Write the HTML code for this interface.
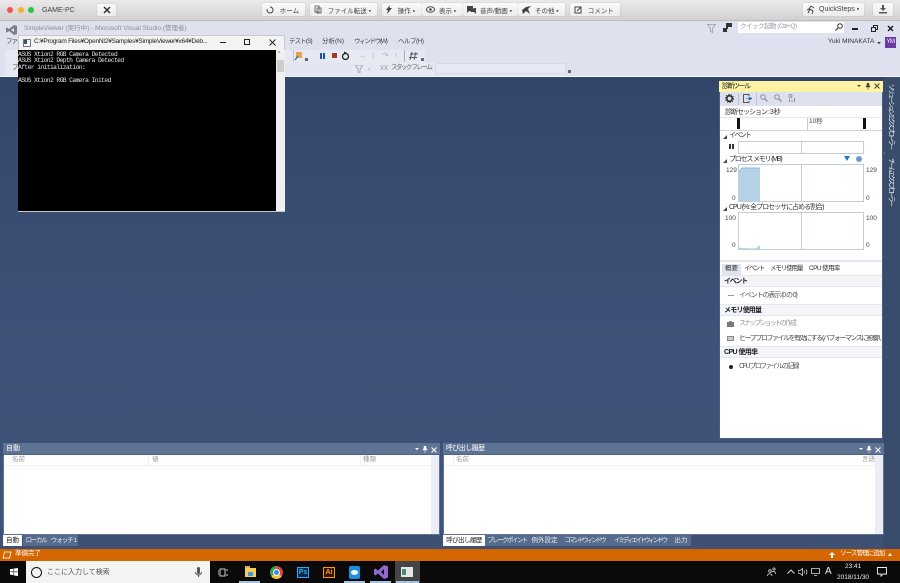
<!DOCTYPE html>
<html lang="ja"><head><meta charset="utf-8">
<style>
*{margin:0;padding:0;box-sizing:border-box}
html{background:#3c4f70}
html,body{width:900px;height:583px;overflow:hidden}
body{position:relative;font-family:"Liberation Sans","Noto Sans CJK JP",sans-serif;font-size:7px;color:#333;filter:blur(.3px)}
.a{position:absolute}
.t{position:absolute;white-space:nowrap;line-height:1}
.btn{position:absolute;top:3px;height:13px;background:linear-gradient(#fafafa,#ececec);border-radius:2px;box-shadow:0 0 1px #aaa;display:flex;align-items:center;font-size:6.5px;color:#444;white-space:nowrap}
.btn svg{margin:0 4px 0 4px}
.dot{position:absolute;top:7px;width:6px;height:6px;border-radius:50%}
.plot{position:absolute;background:#fff;border:1px solid #c6cbdb}
.plot i{position:absolute;left:50%;top:0;bottom:0;width:1px;background:#c6cbdb}
.hdr{position:absolute;background:#f4f5f9;border-top:1px solid #e3e6f0;border-bottom:1px solid #e3e6f0;height:12px;font-weight:bold;font-size:7px;line-height:11px;padding-left:4px;color:#222}
.tab{position:absolute;top:535px;height:11px;background:#566a8c;color:#e8ecf4;font-size:6.5px;line-height:11px;text-align:center;white-space:nowrap;overflow:hidden}
.tab.on{background:#fff;color:#222}
.ttl{position:absolute;height:12px;background:#5f7494;border-bottom:1px solid #4e6384;color:#fff;font-size:7px;line-height:11px;padding-left:3px}
.vt{position:absolute;writing-mode:vertical-rl;text-orientation:sideways;color:#f0f2f8;font-size:6.5px;letter-spacing:-2.2px;line-height:1;white-space:nowrap;left:887px}
.tri{position:absolute;width:0;height:0;border-left:2px solid transparent;border-right:2px solid transparent;border-top:2px solid #444}
.st{position:absolute;width:0;height:0;border-right:4px solid #444;border-top:4px solid transparent}
</style></head><body>

<!-- main bg -->
<div class="a" style="left:0;top:76px;width:900px;height:473px;background:linear-gradient(#33466a,#3f537a 60%,#3e5175)"></div>

<!-- mac bar -->
<div class="a" style="left:0;top:0;width:900px;height:21px;background:linear-gradient(#ebe9e9,#d2d0d0);border-bottom:1px solid #bdbdbd"></div>
<div class="dot" style="left:7px;background:#f0574e"></div>
<div class="dot" style="left:18px;background:#f6b52e"></div>
<div class="dot" style="left:28px;background:#2ec440"></div>
<div class="t" style="left:42px;top:7px;font-size:7px;color:#444">GAME-PC</div>
<div class="btn" style="left:97px;width:19px;justify-content:center;top:4px;height:12px"><svg width="8" height="8" viewBox="0 0 8 8" style="margin:0"><path d="M1 1L7 7M7 1L1 7" stroke="#333" stroke-width="1.5"/></svg></div>
<div class="btn" style="left:262px;width:43px"><svg width="8" height="8" viewBox="0 0 8 8"><path d="M4 1A3 3 0 1 1 1.2 3" fill="none" stroke="#444"/></svg>&nbsp;ホーム</div>
<div class="btn" style="left:310px;width:67px"><svg width="8" height="9" viewBox="0 0 8 9"><path d="M1 1h4v6H1zM3 3h4v5H3z" fill="#fff" stroke="#444" stroke-width=".8"/></svg>&nbsp;ファイル転送 ▪</div>
<div class="btn" style="left:382px;width:40px"><svg width="6" height="9" viewBox="0 0 6 9"><path d="M4 0L0 5h2L1 9l5-6H3.500z" fill="#444"/></svg>&nbsp;操作 ▪</div>
<div class="btn" style="left:422px;width:41px"><svg width="9" height="7" viewBox="0 0 9 7"><ellipse cx="4.500" cy="3.500" rx="4" ry="2.800" fill="none" stroke="#444"/><circle cx="4.500" cy="3.500" r="1.300" fill="#444"/></svg>表示 ▪</div>
<div class="btn" style="left:463px;width:55px"><svg width="9" height="8" viewBox="0 0 9 8"><path d="M0 0h6v5H2L0 7zM7 2h2v6L7 6H3" fill="#444"/></svg>音声/動画 ▪</div>
<div class="btn" style="left:518px;width:47px"><svg width="9" height="8" viewBox="0 0 9 8"><path d="M0 4L4 1 9 0 6 3 8 8 4 5 1 8z" fill="#444"/></svg>その他 ▪</div>
<div class="btn" style="left:570px;width:50px"><svg width="8" height="8" viewBox="0 0 8 8"><path d="M1 1h6v6H1z" fill="none" stroke="#444"/><path d="M3 5L7 1" stroke="#444"/></svg>&nbsp;コメント</div>
<div class="btn" style="left:803px;width:61px;color:#444;font-size:7px"><svg width="8" height="9" viewBox="0 0 8 9"><path d="M4 1L2 4 0 5M4 1l3 2M3 4l3 2-1 3M3 4L1 8" fill="none" stroke="#444"/></svg>QuickSteps ▪</div>
<div class="btn" style="left:873px;width:20px;justify-content:center"><svg width="8" height="9" viewBox="0 0 8 9" style="margin:0"><path d="M3 0h2v3h2L4 6 1 3h2zM0 7h8v1.500H0z" fill="#555"/></svg></div>

<!-- VS chrome -->
<div class="a" style="left:0;top:21px;width:900px;height:55px;background:#dfe2ee"></div>
<div class="a" style="left:0;top:76px;width:900px;height:1px;background:#f4f6fb"></div>
<svg class="a" style="left:6px;top:25px" width="11" height="10" viewBox="0 0 11 10"><path d="M8 0l3 1v8L8 10 3 6 1 7.500 0 7V3l1-.500L3 4zM8 3L5 5l3 2z" fill="#7a7f8e"/></svg>
<div class="t" style="left:24px;top:26px;font-size:6.5px;color:#8a8d99">SimpleViewer (実行中) - Microsoft Visual Studio (管理者)</div>
<div class="t" style="left:6px;top:39px;font-size:6.5px;color:#444;letter-spacing:-1px">ファイル</div>
<div class="t" style="left:289px;top:39px;font-size:6.5px;color:#444;letter-spacing:-.9px">テスト(S)</div>
<div class="t" style="left:322px;top:39px;font-size:6.5px;color:#444">分析(N)</div>
<div class="t" style="left:354px;top:39px;font-size:6.5px;color:#444;letter-spacing:-1.3px">ウィンドウ(W)</div>
<div class="t" style="left:398px;top:39px;font-size:6.5px;color:#444;letter-spacing:-.5px">ヘルプ(H)</div>

<!-- toolbars -->
<div class="a" style="left:5px;top:50px;width:420px;height:13px;background:#e6e8f2"></div>
<div class="a" style="left:5px;top:63px;width:560px;height:12px;background:#e6e8f2"></div>
<div class="a" style="left:293px;top:50px;width:1px;height:12px;background:#c3c7d4"></div>
<svg class="a" style="left:294px;top:51px" width="9" height="10" viewBox="0 0 9 10"><rect x="2" y="1" width="6" height="6" fill="#e8a34a"/><path d="M1 9L4 5" stroke="#2a72c0" stroke-width="1.300"/></svg>
<div class="a" style="left:305px;top:58px;width:3px;height:3px;background:#5d6a88"></div>
<div class="a" style="left:320px;top:53px;width:2px;height:6px;background:#1f4f9a"></div>
<div class="a" style="left:323px;top:53px;width:2px;height:6px;background:#1f4f9a"></div>
<div class="a" style="left:332px;top:53px;width:5px;height:5px;background:#a9371c"></div>
<svg class="a" style="left:341px;top:51px" width="9" height="10" viewBox="0 0 9 10"><circle cx="4.500" cy="5.500" r="3" fill="none" stroke="#222" stroke-width="1.300"/><path d="M3 .500L6 2 3 3.500z" fill="#222"/></svg>
<div class="t" style="left:358px;top:52px;font-size:8px;color:#b0b4c0">→</div>
<div class="t" style="left:371px;top:52px;font-size:8px;color:#b0b4c0">↕</div>
<div class="t" style="left:382px;top:52px;font-size:8px;color:#b0b4c0">↷</div>
<div class="t" style="left:394px;top:52px;font-size:8px;color:#b0b4c0">↑</div>
<div class="a" style="left:404px;top:50px;width:1px;height:12px;background:#a8adbc"></div>
<svg class="a" style="left:409px;top:51px" width="9" height="10" viewBox="0 0 9 10"><path d="M3 1L1 9M7 1L5 9M1 3h8M0 6.500h8" stroke="#555" stroke-width=".9"/></svg>
<div class="a" style="left:421px;top:58px;width:3px;height:3px;background:#5d6a88"></div>
<div class="t" style="left:12px;top:65px;font-size:6.500px;color:#555">プ</div>
<div class="a" style="left:285px;top:63px;width:66px;height:11px;background:#e3e5ef"></div>
<div class="a" style="left:435px;top:63px;width:131px;height:11px;background:#e8eaf3;border:1px solid #d6d9e6"></div>
<svg class="a" style="left:355px;top:65px" width="8" height="8" viewBox="0 0 8 8"><path d="M0 0h8L5 4v4L3 7V4z" fill="none" stroke="#a6aab8"/></svg>
<div class="t" style="left:368px;top:65px;font-size:7px;color:#a6aab8">ₓ</div>
<div class="t" style="left:380px;top:66px;font-size:6px;color:#8a8d9a">XX</div>
<div class="t" style="left:391px;top:65px;font-size:6.500px;color:#666;letter-spacing:-1.5px">スタック フレーム:</div>
<div class="a" style="left:568px;top:70px;width:3px;height:3px;background:#5d6a88"></div>

<svg class="a" style="left:707px;top:24px" width="9" height="9" viewBox="0 0 9 9"><path d="M.5.500h8L5.500 4.500v4L3.500 7.500v-3z" fill="none" stroke="#9a9eac" stroke-width=".8"/></svg>
<svg class="a" style="left:723px;top:23px" width="9" height="9" viewBox="0 0 9 9"><path d="M3 0h6v4H5v2H3zM0 5h4v4H0z" fill="#333"/></svg>
<div class="a" style="left:738px;top:22px;width:106px;height:11px;background:#fff"></div>
<div class="t" style="left:740px;top:24px;font-size:6.500px;color:#9a9ca6;letter-spacing:-.5px">クイック起動 (Ctrl+Q)</div>
<svg class="a" style="left:835px;top:23px" width="8" height="8" viewBox="0 0 8 8"><circle cx="5" cy="3" r="2.300" fill="none" stroke="#333"/><path d="M3 5L.5 7.500" stroke="#333" stroke-width="1.200"/></svg>
<div class="a" style="left:852px;top:28px;width:6px;height:2px;background:#222"></div>
<div class="a" style="left:873px;top:25px;width:5px;height:5px;border:1px solid #222"></div>
<div class="a" style="left:871px;top:27px;width:5px;height:5px;border:1px solid #222;background:#dfe2ee"></div>
<svg class="a" style="left:887px;top:25px" width="7" height="7" viewBox="0 0 7 7"><path d="M1 1L6 6M6 1L1 6" stroke="#111" stroke-width="1.300"/></svg>
<div class="t" style="left:828px;top:39px;font-size:6.500px;color:#333">Yuki MINAKATA</div>
<div class="tri" style="left:877px;top:42px;border-top-color:#333"></div>
<div class="a" style="left:885px;top:37px;width:11px;height:11px;background:#6b3aa0;color:#fff;font-size:6px;line-height:11px;text-align:center;letter-spacing:-.5px">YM</div>

<!-- console -->
<div class="a" style="left:18px;top:35px;width:267px;height:177px;background:#f3f3f3;border:1px solid #c9c9c9"></div>
<div class="a" style="left:18px;top:50px;width:258px;height:161px;background:#000"></div>
<div class="a" style="left:276px;top:50px;width:9px;height:161px;background:#f0f0f0"></div>
<div class="a" style="left:277px;top:60px;width:7px;height:12px;background:#cdcdcd"></div>
<div class="t" style="left:278px;top:52px;font-size:5px;color:#555">^</div>
<svg class="a" style="left:23px;top:39px" width="8" height="8" viewBox="0 0 8 8"><rect x=".5" y=".5" width="7" height="7" fill="#fff" stroke="#778"/><rect x="1" y="1" width="3" height="4" fill="#356"/></svg>
<div class="t" style="left:34px;top:39px;font-size:6.5px;letter-spacing:-.25px;color:#222">C:¥Program Files¥OpenNI2¥Samples¥SimpleViewer¥x64¥Deb...</div>
<div class="a" style="left:220px;top:42px;width:6px;height:1px;background:#222"></div>
<div class="a" style="left:244px;top:39px;width:6px;height:6px;border:1px solid #222"></div>
<svg class="a" style="left:269px;top:39px" width="7" height="7" viewBox="0 0 7 7"><path d="M.5.500l6 6M6.500.500l-6 6" stroke="#222" stroke-width=".9"/></svg>
<div class="t" style="left:18px;top:52px;font-family:'Liberation Mono',monospace;font-size:6.300px;line-height:6.450px;letter-spacing:-.58px;color:#e0e0e0;white-space:pre">ASUS Xtion2 RGB Camera Detected
ASUS Xtion2 Depth Camera Detected
After initialization:

ASUS Xtion2 RGB Camera Inited</div>

<!-- right vertical tabs -->
<div class="a" style="left:883px;top:77px;width:17px;height:472px;background:#3a4c6c"></div>
<div class="vt" style="top:84px">ソリューション エクスプローラー</div>
<div class="vt" style="top:158px">チーム エクスプローラー</div>
<div class="a" style="left:884px;top:152px;width:1px;height:3px;background:#5f7494"></div>

<!-- diag panel -->
<div class="a" style="left:719px;top:81px;width:164px;height:358px;background:#fff;border:1px solid #4a5d80;border-top:0"></div>
<div class="a" style="left:719px;top:81px;width:164px;height:11px;background:#fdf3a3"></div>
<div class="t" style="left:722px;top:83px;font-size:7px;color:#222;letter-spacing:-1.5px">診断ツール</div>
<div class="tri" style="left:857px;top:85px"></div>
<svg class="a" style="left:865px;top:83px" width="6" height="7" viewBox="0 0 6 7"><path d="M2 0h2v3h1v1H1V3h1zM3 4v3" fill="#444" stroke="#444" stroke-width=".5"/></svg>
<svg class="a" style="left:874px;top:83px" width="6" height="6" viewBox="0 0 6 6"><path d="M.5.500l5 5M5.500.500l-5 5" stroke="#444"/></svg>
<div class="a" style="left:720px;top:92px;width:162px;height:14px;background:#dde1ed"></div>
<svg class="a" style="left:725px;top:94px" width="9" height="9" viewBox="0 0 9 9"><circle cx="4.500" cy="4.500" r="2.700" fill="none" stroke="#222" stroke-width="1.500"/><circle cx="4.500" cy="4.500" r="4" fill="none" stroke="#222" stroke-width="1" stroke-dasharray="1.200 1.300"/></svg>
<div class="a" style="left:738px;top:93px;width:1px;height:12px;background:#bcc1d0"></div>
<svg class="a" style="left:743px;top:94px" width="9" height="9" viewBox="0 0 9 9"><path d="M6 2V.5H.5v8H6V7" fill="none" stroke="#555"/><path d="M3 4.500h3V3l3 1.500L6 6V4.500" fill="#1e6fb8" stroke="#1e6fb8" stroke-width=".6"/></svg>
<div class="a" style="left:756px;top:93px;width:1px;height:12px;background:#bcc1d0"></div>
<svg class="a" style="left:760px;top:94px" width="8" height="8" viewBox="0 0 8 8"><circle cx="3" cy="3" r="2.300" fill="none" stroke="#8b8f9c"/><path d="M5 5l2.500 2.500" stroke="#8b8f9c" stroke-width="1.300"/></svg>
<svg class="a" style="left:774px;top:94px" width="8" height="8" viewBox="0 0 8 8"><circle cx="3" cy="3" r="2.300" fill="none" stroke="#8b8f9c"/><path d="M5 5l2.500 2.500" stroke="#8b8f9c" stroke-width="1.300"/></svg>
<svg class="a" style="left:788px;top:94px" width="8" height="8" viewBox="0 0 8 8"><circle cx="2.500" cy="2" r="1.500" fill="none" stroke="#8b8f9c"/><path d="M1 5h1v3H1zM3.500 6h1v2h-1zM6 4h1v4H6z" fill="#8b8f9c"/></svg>
<div class="t" style="left:725px;top:109px;font-size:7px;color:#333;letter-spacing:-1px">診断セッション : 3 秒</div>
<div class="a" style="left:720px;top:117px;width:162px;height:14px;background:#fff;border-top:1px solid #e2e5ee;border-bottom:1px solid #cfd3e0"></div>
<div class="a" style="left:737px;top:118px;width:3px;height:11px;background:#111"></div>
<div class="a" style="left:863px;top:118px;width:3px;height:11px;background:#111"></div>
<div class="a" style="left:807px;top:118px;width:1px;height:12px;background:#c6cbdb"></div>
<div class="t" style="left:809px;top:119px;font-size:6.500px;color:#444">10秒</div>
<div class="st" style="left:723px;top:135px"></div>
<div class="t" style="left:729px;top:132px;font-size:7px;color:#333;letter-spacing:-1.7px">イベント</div>
<div class="a" style="left:729px;top:144px;width:2px;height:5px;background:#333"></div>
<div class="a" style="left:732px;top:144px;width:2px;height:5px;background:#333"></div>
<div class="plot" style="left:738px;top:141px;width:126px;height:13px"><i></i></div>
<div class="st" style="left:723px;top:159px"></div>
<div class="t" style="left:729px;top:156px;font-size:7px;color:#333;letter-spacing:-1.2px">プロセス メモリ (MB)</div>
<div class="a" style="left:844px;top:156px;width:0;height:0;border-left:3px solid transparent;border-right:3px solid transparent;border-top:5px solid #1e7ac8"></div>
<div class="a" style="left:856px;top:156px;width:6px;height:6px;border-radius:50%;background:#6a9bd0"></div>
<div class="plot" style="left:738px;top:164px;width:126px;height:38px"><i></i></div>
<svg class="a" style="left:739px;top:167px" width="22" height="34" viewBox="0 0 22 34"><path d="M0 34V5L3 1H21V34z" fill="#b4d2e6"/><path d="M0 5L3 1H21" fill="none" stroke="#8cb8d8"/></svg>
<div class="t" style="left:726px;top:168px;font-size:6.500px;color:#444">129</div>
<div class="t" style="left:732px;top:196px;font-size:6.500px;color:#444">0</div>
<div class="t" style="left:866px;top:168px;font-size:6.500px;color:#444">129</div>
<div class="t" style="left:866px;top:196px;font-size:6.500px;color:#444">0</div>
<div class="st" style="left:723px;top:207px"></div>
<div class="t" style="left:729px;top:204px;font-size:7px;color:#333;letter-spacing:-1px">CPU (%: 全プロセッサに占める割合)</div>
<div class="plot" style="left:738px;top:212px;width:126px;height:38px"><i></i></div>
<svg class="a" style="left:739px;top:244px" width="24" height="5" viewBox="0 0 24 5"><path d="M0 5V3.500L3 4l12 .500L19 3l2-2V5z" fill="#b4d2e6"/></svg>
<div class="t" style="left:725px;top:216px;font-size:6.500px;color:#444">100</div>
<div class="t" style="left:732px;top:243px;font-size:6.500px;color:#444">0</div>
<div class="t" style="left:866px;top:216px;font-size:6.500px;color:#444">100</div>
<div class="t" style="left:866px;top:243px;font-size:6.500px;color:#444">0</div>
<div class="a" style="left:720px;top:260px;width:162px;height:2px;background:#e3e6f0"></div>
<div class="a" style="left:722px;top:264px;width:19px;height:11px;background:#dfe4f0"></div>
<div class="t" style="left:725px;top:266px;font-size:6.500px;color:#333">概要</div>
<div class="t" style="left:744px;top:266px;font-size:6.500px;color:#333;letter-spacing:-1.6px">イベント</div>
<div class="t" style="left:770px;top:266px;font-size:6.500px;color:#333;letter-spacing:-1.1px">メモリ使用量</div>
<div class="t" style="left:809px;top:266px;font-size:6.500px;color:#333;letter-spacing:-.6px">CPU 使用率</div>
<div class="hdr" style="top:275px;width:162px;left:720px;letter-spacing:-1.3px">イベント</div>
<div class="a" style="left:728px;top:295px;width:6px;height:1px;background:#999"></div>
<div class="t" style="left:739px;top:292px;font-size:7px;color:#555;letter-spacing:-1.1px">イベントの表示 (0 の 0)</div>
<div class="hdr" style="top:304px;width:162px;left:720px;letter-spacing:-.8px">メモリ使用量</div>
<svg class="a" style="left:727px;top:321px" width="7" height="6" viewBox="0 0 7 6"><path d="M0 1h2l.5-1h2L5 1h2v5H0z" fill="#777"/></svg>
<div class="t" style="left:739px;top:320px;font-size:7px;color:#999;letter-spacing:-1.9px">スナップショットの作成</div>
<div class="a" style="left:727px;top:336px;width:7px;height:5px;background:#ccc;border:1px solid #888"></div>
<div class="t" style="left:739px;top:335px;font-size:7px;color:#444;width:142px;overflow:hidden;letter-spacing:-1.5px">ヒープ プロファイルを有効にする (パフォーマンスに影響し...</div>
<div class="hdr" style="top:346px;width:162px;left:720px;letter-spacing:-.6px">CPU 使用率</div>
<div class="a" style="left:729px;top:365px;width:4px;height:4px;border-radius:50%;background:#222"></div>
<div class="t" style="left:739px;top:363px;font-size:7px;color:#555;letter-spacing:-1.6px">CPU プロファイルの記録</div>

<!-- bottom left panel -->
<div class="a" style="left:3px;top:443px;width:437px;height:92px;background:#fff;border:1px solid #5f7494"></div>
<div class="ttl" style="left:3px;top:443px;width:437px">自動</div>
<div class="tri" style="left:415px;top:448px;border-top-color:#fff"></div>
<svg class="a" style="left:422px;top:446px" width="6" height="7" viewBox="0 0 6 7"><path d="M2 0h2v3h1v1H1V3h1zM3 4v3" fill="#fff" stroke="#fff" stroke-width=".5"/></svg>
<svg class="a" style="left:431px;top:447px" width="6" height="6" viewBox="0 0 6 6"><path d="M.5.500l5 5M5.500.500l-5 5" stroke="#fff"/></svg>
<div class="a" style="left:4px;top:465px;width:427px;height:1px;background:#eef0f6"></div>
<div class="a" style="left:431px;top:455px;width:8px;height:79px;background:#eceef5"></div>
<div class="a" style="left:148px;top:455px;width:1px;height:10px;background:#eef0f6"></div>
<div class="a" style="left:360px;top:455px;width:1px;height:10px;background:#eef0f6"></div>
<div class="t" style="left:12px;top:457px;font-size:6.500px;color:#999">名前</div>
<div class="t" style="left:152px;top:457px;font-size:6.500px;color:#999">値</div>
<div class="t" style="left:363px;top:457px;font-size:6.500px;color:#999">種類</div>
<div class="tab on" style="left:3px;width:19px">自動</div>
<div class="tab" style="left:23px;width:26px;letter-spacing:-1.3px">ローカル</div>
<div class="tab" style="left:49px;width:29px;letter-spacing:-1px">ウォッチ 1</div>

<!-- bottom right panel -->
<div class="a" style="left:443px;top:443px;width:441px;height:92px;background:#fff;border:1px solid #5f7494"></div>
<div class="ttl" style="left:443px;top:443px;width:441px;letter-spacing:-.6px">呼び出し履歴</div>
<div class="tri" style="left:859px;top:448px;border-top-color:#fff"></div>
<svg class="a" style="left:866px;top:446px" width="6" height="7" viewBox="0 0 6 7"><path d="M2 0h2v3h1v1H1V3h1zM3 4v3" fill="#fff" stroke="#fff" stroke-width=".5"/></svg>
<svg class="a" style="left:875px;top:447px" width="6" height="6" viewBox="0 0 6 6"><path d="M.5.500l5 5M5.500.500l-5 5" stroke="#fff"/></svg>
<div class="a" style="left:444px;top:465px;width:431px;height:1px;background:#eef0f6"></div>
<div class="a" style="left:875px;top:455px;width:8px;height:79px;background:#eceef5"></div>
<div class="a" style="left:453px;top:455px;width:1px;height:10px;background:#eef0f6"></div>
<div class="t" style="left:456px;top:457px;font-size:6.500px;color:#999">名前</div>
<div class="t" style="left:862px;top:457px;font-size:6.500px;color:#999">言語</div>
<div class="tab on" style="left:443px;width:42px;letter-spacing:-.6px">呼び出し履歴</div>
<div class="tab" style="left:485px;width:44px;letter-spacing:-1.6px">ブレークポイント</div>
<div class="tab" style="left:529px;width:31px">例外設定</div>
<div class="tab" style="left:560px;width:49px;letter-spacing:-2px">コマンド ウィンドウ</div>
<div class="tab" style="left:609px;width:62px;letter-spacing:-2.1px">イミディエイト ウィンドウ</div>
<div class="tab" style="left:671px;width:20px">出力</div>

<!-- status -->
<div class="a" style="left:0;top:549px;width:900px;height:12px;background:#d46600"></div>
<svg class="a" style="left:2px;top:551px" width="10" height="8" viewBox="0 0 10 8"><path d="M2.500 1H9L7.500 7H1z" fill="none" stroke="#fff" stroke-width=".8"/></svg>
<div class="t" style="left:15px;top:551px;font-size:6.500px;color:#fff">準備完了</div>
<svg class="a" style="left:829px;top:552px" width="6" height="6" viewBox="0 0 6 6"><path d="M3 0L6 3H4V6H2V3H0z" fill="#fff"/></svg>
<div class="t" style="left:840px;top:551px;font-size:6.500px;color:#fff;letter-spacing:-.9px">ソース管理に追加</div>
<div class="a" style="left:888px;top:553px;width:0;height:0;border-left:2px solid transparent;border-right:2px solid transparent;border-bottom:3px solid #fff"></div>

<!-- taskbar -->
<div class="a" style="left:0;top:561px;width:900px;height:22px;background:#0a0a0a"></div>
<svg class="a" style="left:10px;top:568px" width="8" height="8" viewBox="0 0 9 9"><path d="M0 1.300L4 .700V4H0zM4.600.600L9 0V4H4.600zM0 4.600H4V8L0 7.500zM4.600 4.600H9V9L4.600 8.400z" fill="#fff"/></svg>
<div class="a" style="left:26px;top:561px;width:184px;height:22px;background:#f3f3f3"></div>
<div class="a" style="left:31px;top:567px;width:11px;height:11px;border-radius:50%;border:1.500px solid #111"></div>
<div class="t" style="left:47px;top:569px;font-size:7px;color:#555">ここに入力して検索</div>
<svg class="a" style="left:195px;top:567px" width="7" height="11" viewBox="0 0 7 11"><rect x="2" y="0" width="3" height="7" rx="1.500" fill="#555"/><path d="M.5 5a3 3 0 0 0 6 0M3.500 8v2" fill="none" stroke="#555"/></svg>
<svg class="a" style="left:218px;top:568px" width="10" height="9" viewBox="0 0 10 9"><path d="M2 1h5v7H2z" fill="none" stroke="#ccc"/><path d="M0 2v5M9 1v2M9 6v2" stroke="#ccc"/></svg>
<div class="a" style="left:245px;top:568px;width:11px;height:9px;background:#f4cd5a"></div>
<div class="a" style="left:245px;top:566px;width:5px;height:2px;background:#e0b040"></div>
<div class="a" style="left:248px;top:572px;width:5px;height:4px;background:#3e9bd8"></div>
<div class="a" style="left:239px;top:581px;width:21px;height:2px;background:#a6c3de"></div>
<div class="a" style="left:270px;top:566px;width:13px;height:13px;border-radius:50%;background:conic-gradient(#e2453a 0 35%,#f5c634 35% 65%,#3aa757 65% 100%)"></div>
<div class="a" style="left:274px;top:570px;width:5px;height:5px;border-radius:50%;background:#3f86e8;box-shadow:0 0 0 1px #fff"></div>
<div class="a" style="left:297px;top:567px;width:12px;height:11px;background:#0d2a42;border:1px solid #31a8ff;color:#31a8ff;font-size:7px;line-height:9px;text-align:center;font-weight:bold">Ps</div>
<div class="a" style="left:323px;top:567px;width:12px;height:11px;background:#2e1500;border:1px solid #ff9a00;color:#ff9a00;font-size:7px;line-height:9px;text-align:center;font-weight:bold">Ai</div>
<div class="a" style="left:349px;top:566px;width:11px;height:13px;background:#1a8fe0;border-radius:2px"></div>
<div class="a" style="left:351px;top:570px;width:7px;height:5px;background:#fff;border-radius:50%"></div>
<div class="a" style="left:344px;top:581px;width:21px;height:2px;background:#a6c3de"></div>
<svg class="a" style="left:374px;top:565px" width="14" height="14" viewBox="0 0 14 14"><path d="M10 0l4 1.500v11L10 14 4 8.500 1.500 10.500 0 9.500v-5L1.500 3.500 4 5.500zM10 4L7 7l3 3z" fill="#9168d0"/></svg>
<div class="a" style="left:370px;top:581px;width:21px;height:2px;background:#a6c3de"></div>
<div class="a" style="left:395px;top:561px;width:25px;height:22px;background:#454545"></div>
<div class="a" style="left:401px;top:567px;width:12px;height:10px;background:#e6e6e6"></div>
<div class="a" style="left:402px;top:569px;width:4px;height:6px;background:#4a8a70"></div>
<div class="a" style="left:396px;top:581px;width:23px;height:2px;background:#a6c3de"></div>

<svg class="a" style="left:767px;top:567px" width="9" height="9" viewBox="0 0 9 9"><circle cx="3" cy="4" r="1.300" fill="none" stroke="#ddd" stroke-width=".8"/><circle cx="7" cy="2" r="1.100" fill="none" stroke="#ddd" stroke-width=".8"/><path d="M.5 9c0-3 4.500-3 4.500 0M5 5c1-1 3.500-1 3.500 2" fill="none" stroke="#ddd" stroke-width=".8"/></svg>
<svg class="a" style="left:787px;top:569px" width="8" height="5" viewBox="0 0 8 5"><path d="M.5 4.500L4 1l3.500 3.500" fill="none" stroke="#ddd"/></svg>
<svg class="a" style="left:798px;top:568px" width="10" height="8" viewBox="0 0 10 8"><path d="M0 2.500h2L4.500.500v7L2 5.500H0z" fill="none" stroke="#ddd" stroke-width=".8"/><path d="M6 2.500c.7.800.7 2.200 0 3M8 1.500c1.200 1.500 1.200 3.500 0 5" fill="none" stroke="#ddd" stroke-width=".7"/></svg>
<svg class="a" style="left:811px;top:568px" width="10" height="8" viewBox="0 0 10 8"><path d="M.5.500h8v5h-8zM3 7.500h3" fill="none" stroke="#ddd" stroke-width=".8"/></svg>
<div class="t" style="left:825px;top:567px;font-size:10px;color:#eee">A</div>
<div class="t" style="left:845px;top:564px;font-size:6.500px;color:#eee">23:41</div>
<div class="t" style="left:837px;top:575px;font-size:6.500px;color:#eee">2018/11/30</div>
<svg class="a" style="left:877px;top:567px" width="10" height="10" viewBox="0 0 10 10"><path d="M.5.500h9v6.500H6L4 9V7H.5z" fill="none" stroke="#eee" stroke-width=".9"/></svg>
</body></html>
